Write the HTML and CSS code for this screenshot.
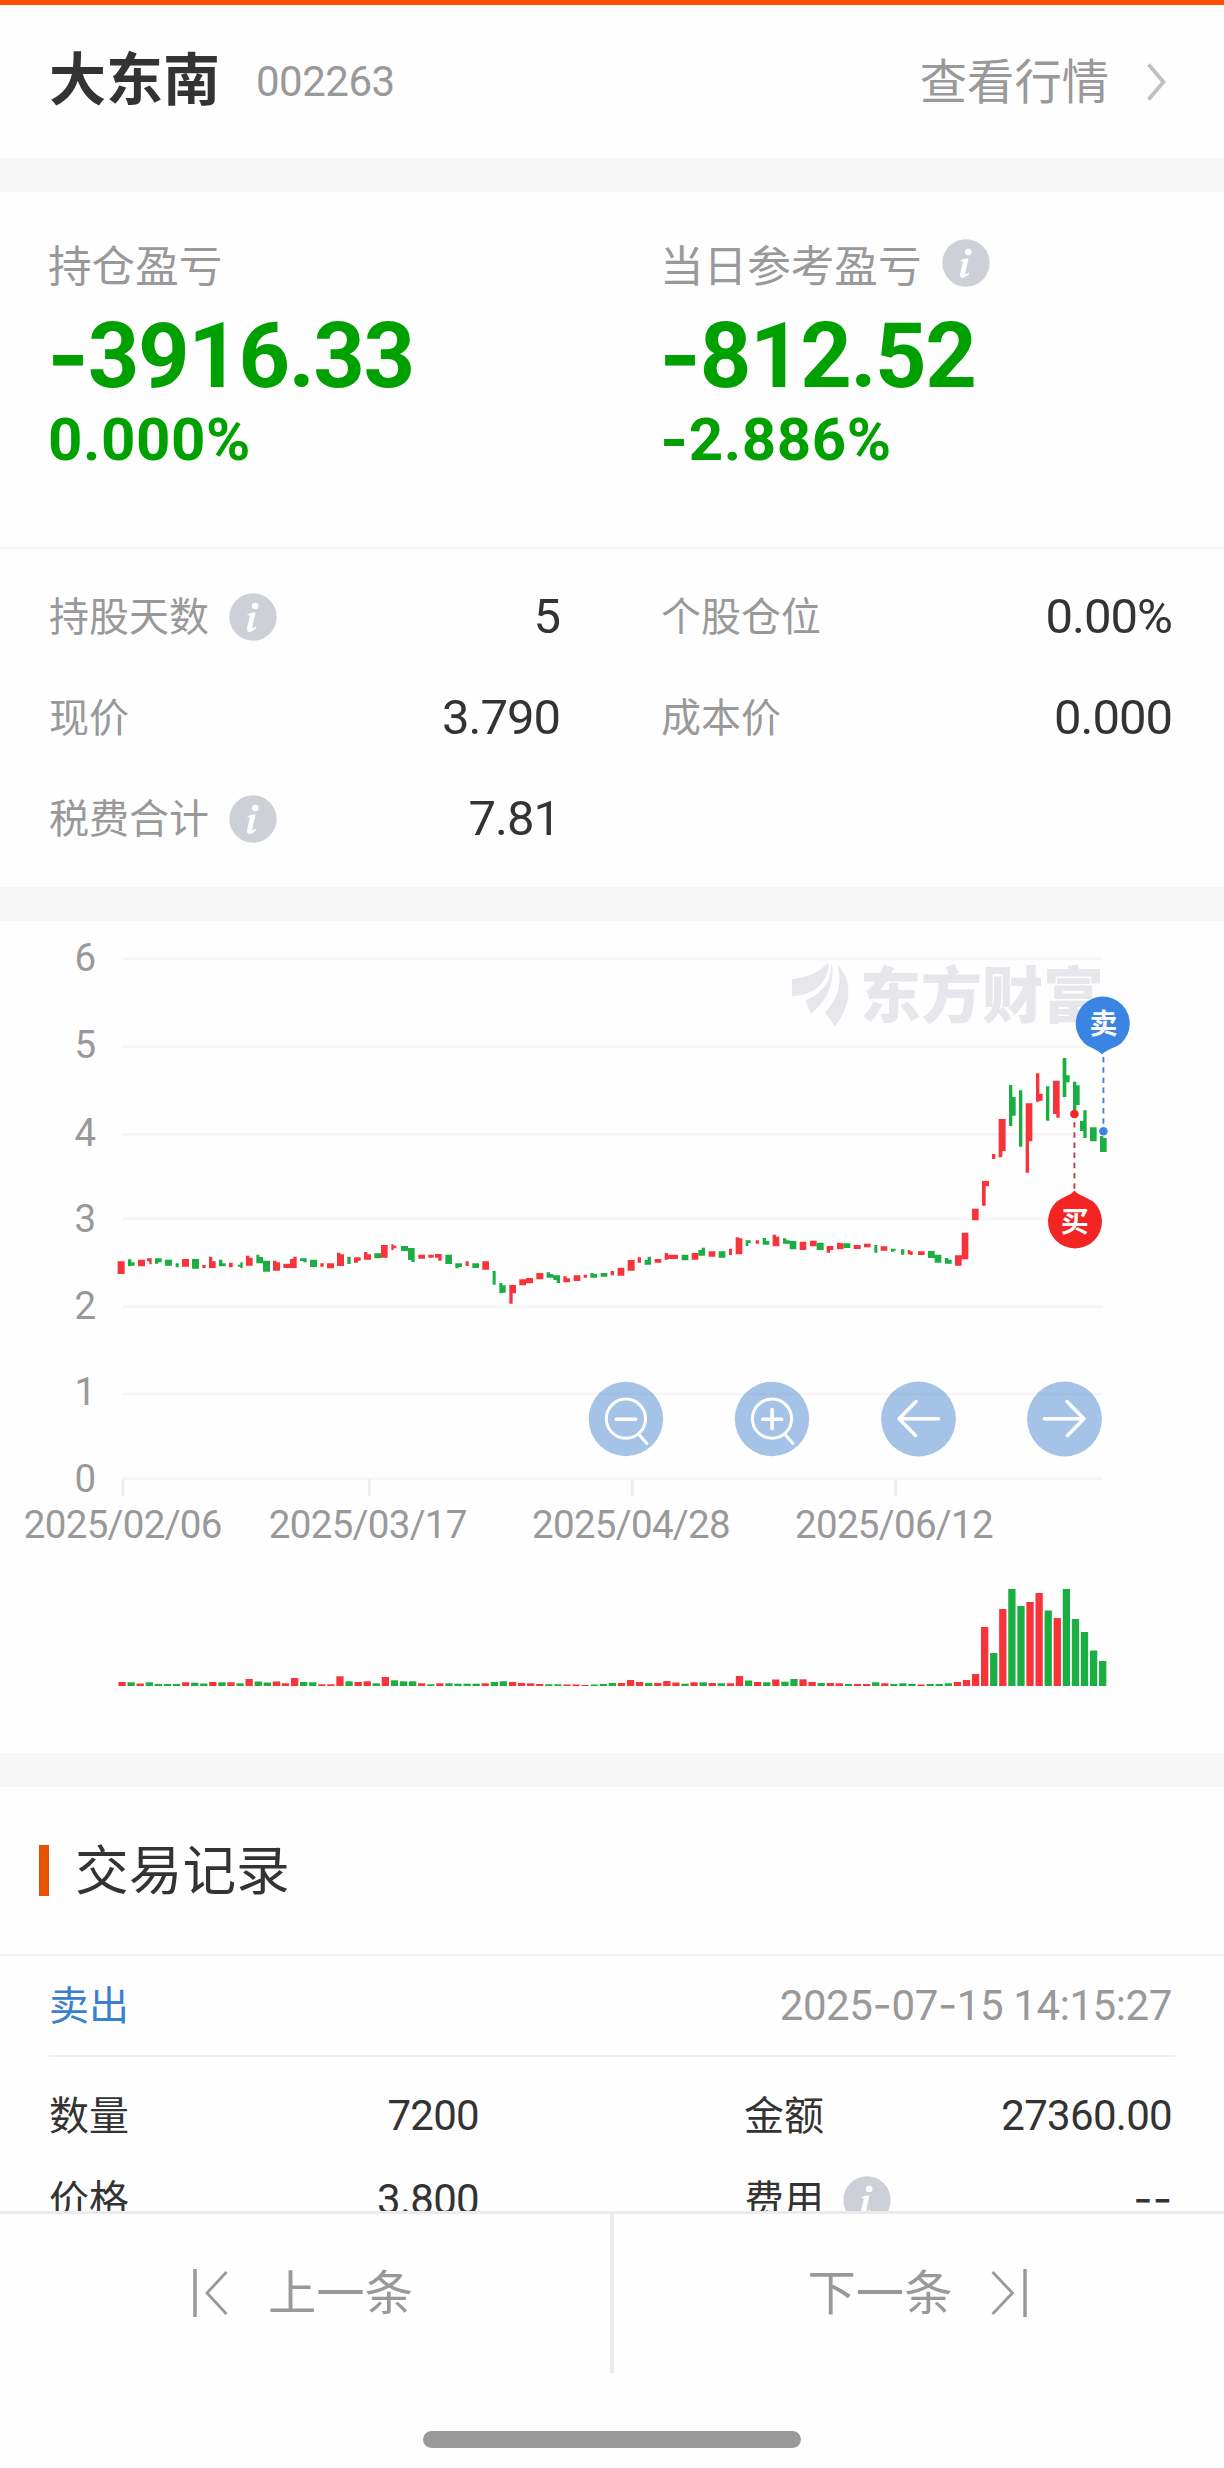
FILE: index.html
```html
<!DOCTYPE html>
<html lang="zh-CN">
<head>
<meta charset="utf-8">
<title>大东南 002263</title>
<link rel="stylesheet" href="styles.css">
</head>
<body>
<svg class="defs" width="0" height="0" aria-hidden="true">
  <symbol id="info" viewBox="0 0 48 48">
    <circle cx="24" cy="24" r="23.7" fill="#cdd0d6"/>
    <circle cx="26.2" cy="13" r="3.3" fill="#fff"/>
    <path d="M18.6 21.4C21 20 24 19.4 26.6 19.3L23.4 33.6C23 35.6 24 35.6 26.6 33.6L27.2 34.8C24.6 38 21.6 39.4 19.6 38.8C17.8 38.2 17.8 36 18.4 33.6L20.8 23.4C21.1 22.2 20 22.2 18.4 22.6Z" fill="#fff"/>
  </symbol>
</svg>
<div class="page">
  <main class="content">
    <header class="card head">
      <h1 class="name">大东南</h1>
      <span class="code">002263</span>
      <a class="quote">查看行情</a>
      <svg class="chevron" viewBox="0 0 20 38"><path d="M1.5 1.5L16.5 19L1.5 36.5"/></svg>
    </header>

    <section class="card overview">
      <div class="profits">
        <div class="profit">
          <div class="caption">持仓盈亏</div>
          <div class="amount"><span class="dash">-</span>3916.33</div>
          <div class="rate">0.000%</div>
        </div>
        <div class="profit">
          <div class="caption">当日参考盈亏<svg class="info"><use href="#info"/></svg></div>
          <div class="amount"><span class="dash">-</span>812.52</div>
          <div class="rate"><span class="dash">-</span>2.886%</div>
        </div>
      </div>
      <div class="facts">
        <div class="fact"><span class="key">持股天数</span><svg class="info"><use href="#info"/></svg><span class="val">5</span></div>
        <div class="fact"><span class="key">个股仓位</span><span class="val">0.00%</span></div>
        <div class="fact"><span class="key">现价</span><span class="val">3.790</span></div>
        <div class="fact"><span class="key">成本价</span><span class="val">0.000</span></div>
        <div class="fact"><span class="key">税费合计</span><svg class="info"><use href="#info"/></svg><span class="val">7.81</span></div>
      </div>
    </section>

    <section class="card chart">
      <svg class="plot" viewBox="0 921 1224 832">
        <path class="grid" d="M122.7 959H1102.3M122.7 1046.7H1102.3M122.7 1134.3H1102.3M122.7 1218.7H1102.3M122.7 1306.7H1102.3M122.7 1394H1102.3M122.7 1478.7H1102.3"/>
        <path class="tick" d="M122.8 1479V1496M369.3 1479V1496M632.4 1479V1496M895.5 1479V1496"/>
        <g class="axis y">
          <text x="85" y="971">6</text>
          <text x="85" y="1058">5</text>
          <text x="85" y="1145.5">4</text>
          <text x="85" y="1232">3</text>
          <text x="85" y="1318.5">2</text>
          <text x="85" y="1405">1</text>
          <text x="85" y="1492">0</text>
        </g>
        <g class="axis">
          <text x="122.8" y="1538">2025/02/06</text>
          <text x="367.8" y="1538">2025/03/17</text>
          <text x="631" y="1538">2025/04/28</text>
          <text x="894" y="1538">2025/06/12</text>
        </g>

        <g class="watermark">
          <path transform="translate(760 930) scale(.33333)" d="M96 148C145 142 180 125 206 97C207 135 185 165 163 180C135 194 115 198 96 198ZM213 97C222 120 218 165 195 205C180 227 165 240 152 253C150 240 138 225 138 210C165 200 190 180 203 155C212 138 215 118 213 97ZM232 106C255 125 266 155 265 190C263 232 245 262 223 290C216 272 205 262 195 248C215 225 235 195 238 160C240 140 238 125 232 106Z"/>
          <text x="860" y="1018">东方财富</text>
        </g>

        <g transform="translate(90 1200) scale(.33333)">
          <path class="up" d="M83 184H104V222H83ZM144 179H165V199H144ZM171 175H185V193H178V184H171ZM276 177H297V200H276ZM337 195H347V204H337ZM357 170H367V184H377V204H357ZM417 188H428V202H417ZM468 167H478V173H488V197H468ZM549 182H559V187H570V212H549ZM580 191H600V177H610V170H620V204H580ZM691 190H701V200H691ZM711 190H732V205H711ZM741 158H751V163H762V198H741ZM792 172H812V182H804V188H792ZM822 156H832V163H843V179H822ZM873 135H893V173H873ZM904 133H911V137H919V145H911V150H904ZM985 164H1005V176H985ZM1015 164H1031V173H1015ZM1035 162H1055V182H1045V173H1035ZM1127 184H1136V198H1127ZM1177 184H1197V209H1177ZM1258 255H1278V280H1268V311H1258ZM1288 238H1308V234H1329V250H1308V256H1288ZM1339 219H1360V238H1339Z"/>
          <path class="down" d="M114 178H124V187H134V197H124V199H114ZM195 175H215V187H205V191H195ZM225 179H246V197H225ZM257 190H266V202H257ZM306 177H327V206H306ZM387 179H397V190H407V199H387ZM451 187H458V204H451V200H444V194H451ZM499 164H508V171H519V182H540V215H519V190H499ZM630 175H650V187H640V183H630ZM660 179H681V201H660ZM772 170H782V192H772ZM853 160H873V175H853ZM933 138H954V144H974V186H964V180H954V153H933ZM1066 164H1086V192H1066ZM1096 190H1116V201H1106V205H1096ZM1147 190H1167V204H1147ZM1208 213H1217V254H1208ZM1228 249H1237V256H1247V278H1237V280H1228Z"/>
        </g>
        <g transform="translate(540 1200) scale(.33333)">
          <path class="up" d="M70 229H80V235H90V247H70ZM101 226H121V243H101ZM131 224H141V233H131ZM212 213H222V226H212ZM233 203H253V227H233ZM263 180H284V212H263ZM293 172H303V188H293ZM344 177H364V188H344ZM374 159H384V164H414V177H384V179H374ZM455 159H475V179H455ZM506 154H526V170H506ZM567 146H576V165H567ZM587 112H597V115H607V163H587ZM647 121H657V131H647ZM698 104H708V110H718V139H698ZM779 125H799V150H779ZM810 122H830V139H810ZM860 138H880V150H870V158H860ZM891 128H901V130H911V148H891ZM941 135H962V147H941ZM972 131H992V142H972ZM1022 139H1042V152H1022ZM1103 150H1110V154H1118V165H1110V163H1103ZM1134 154H1154V165H1134ZM1245 166H1265V98H1285V178H1265V197H1245ZM1296 26H1316V61H1296Z"/>
          <path class="down" d="M20 217H30V222H40V226H60V249H50V240H40V233H20ZM151 219H161V222H171V233H151ZM182 219H202V230H182ZM323 170H333V194H314V180H323ZM425 164H445V181H425ZM475 150H485V143H495V167H475ZM536 154H556V173H536ZM617 121H632V129H625V138H617ZM668 114H678V123H688V134H668ZM729 115H739V121H749V123H769V148H749V131H729ZM830 128H851V150H830ZM911 130H931V144H911ZM1003 135H1012V158H1003ZM1053 146H1067V152H1062V155H1053ZM1083 148H1093V164H1083ZM1164 153H1184V164H1204V188H1184V174H1164ZM1215 174H1225V179H1235V191H1215Z"/>
        </g>
        <g transform="translate(760 930) scale(.33333)">
          <path class="up" d="M666 753H687V769H677V827H666ZM696 672H706V687H696ZM716 567H737V663H727V682H716ZM797 520H817V634H807V728H797ZM828 430H838V491H848V512H838V515H828ZM879 452H899V563H889V552H879Z"/>
          <path class="down" d="M747 465H757V501H767V557H757V588H747ZM777 481H787V650H777ZM858 469H868V572H858ZM908 384H919V436H929V457H919V501H908ZM939 455H949V466H959V525H949V540H939ZM970 541H980V624H970V603H960V573H970ZM990 592H1010V634H990ZM1020 618H1030V624H1040V666H1020Z"/>
        </g>

        <g id="volume"></g>

        <g class="mark sell">
          <path class="lead" d="M1103.4 1057V1128"/>
          <circle cx="1103.4" cy="1131.3" r="4.3"/>
          <path d="M1102 1054.6C1098 1049.5 1091 1048.5 1084.5 1043.5A27 27 0 1 1 1121 1043.5C1114 1048.5 1106 1049.5 1102 1054.6Z"/>
          <text x="1103.5" y="1034">卖</text>
        </g>
        <g class="mark buy">
          <path class="lead" d="M1074.4 1122V1190"/>
          <circle cx="1074.4" cy="1114" r="4.3"/>
          <path d="M1074.5 1190.4C1078.5 1195.5 1086 1196.5 1093.2 1201.5A27 27 0 1 1 1056.8 1201.5C1063 1196.5 1070.5 1195.5 1074.5 1190.4Z"/>
          <text x="1074.8" y="1232">买</text>
        </g>

        <g class="control" transform="translate(625.9 1419)">
          <circle class="disc" r="37.2"/>
          <circle r="19.6" cy="-.3"/><path d="M13 15.5L21 24.5"/><path class="thick" d="M-9.5 .3H9.7"/>
        </g>
        <g class="control" transform="translate(772 1419)">
          <circle class="disc" r="37.2"/>
          <circle r="19.6" cy="-.3"/><path d="M13 15.5L21 24.5"/><path class="thick" d="M-9.5 .3H9.7M.1 -9.5V9.7"/>
        </g>
        <g class="control" transform="translate(918.5 1419)">
          <circle class="disc" r="37.4"/>
          <path class="thick" d="M20 -.3H-19M-2.5 -17.5L-19.5 -.3L-3 16.5"/>
        </g>
        <g class="control" transform="translate(1064.5 1419)">
          <circle class="disc" r="37.4"/>
          <path class="thick" d="M-20 -.3H19M2.5 -17.5L19.5 -.3L3 16.5"/>
        </g>
      </svg>
    </section>

    <section class="card records">
      <h2 class="title"><span class="title-name">交易记录</span></h2>
      <div class="record">
        <div class="record-head"><span class="side">卖出</span><time class="time">2025<span class="dash">-</span>07<span class="dash">-</span>15 14:15:27</time></div>
        <div class="record-row">
          <span class="cell"><span class="label">数量</span><span class="num">7200</span></span>
          <span class="cell"><span class="label">金额</span><span class="num">27360.00</span></span>
        </div>
        <div class="record-row">
          <span class="cell"><span class="label">价格</span><span class="num">3.800</span></span>
          <span class="cell"><span class="label">费用</span><svg class="info"><use href="#info"/></svg><span class="num dash">--</span></span>
        </div>
      </div>
    </section>
  </main>

  <footer class="foot">
    <nav class="pager">
      <a class="step prev"><svg viewBox="0 0 36 50"><path d="M2 1V49" class="stop"/><path d="M33.5 4L14 25L33.5 46"/></svg><span class="step-name">上一条</span></a>
      <a class="step next"><span class="step-name">下一条</span><svg viewBox="0 0 36 50"><path d="M34 1V49" class="stop"/><path d="M1.5 4L21.5 25L1.5 46"/></svg></a>
    </nav>
    <div class="home"></div>
  </footer>
</div>
<script src="volume.js"></script>
</body>
</html>
```

FILE: styles.css
```css
* { box-sizing: border-box; }
body {
  margin: 0;
  background: #fff;
  color: #333;
  font-family: Roboto, "Noto Sans CJK SC", sans-serif;
}
h1, h2 { margin: 0; }
.defs { display: block; height: 0; }
.page {
  display: flex;
  flex-direction: column;
  width: 1224px;
  height: 2468px;
  overflow: hidden;
}
.content {
  display: flex;
  flex-direction: column;
  gap: 34px;
  height: 2211px;
  flex: none;
  overflow: hidden;
  background: #f7f7f7;
}
.card { background: #fefefe; flex: none; }
.info { width: 48px; height: 48px; flex: none; }
.dash { font-family: Inter, sans-serif; line-height: 0; }

.head {
  display: flex;
  align-items: center;
  height: 158px;
  padding: 0 57px 0 49px;
  border-top: 5px solid #ff5000;
}
.name { font-size: 57px; line-height: 80px; font-weight: 700; padding-bottom: 1px; }
.code { margin-left: 36px; font-size: 42px; letter-spacing: -.5px; color: #999; }
.quote { margin-left: auto; padding-bottom: 7px; font-size: 47.3px; color: #999; }
.chevron { width: 20px; height: 38px; margin: 0 0 0 38px; fill: none; stroke: #c0c0c0; stroke-width: 3.8; }

.overview { height: 695px; }
.profits {
  display: grid;
  grid-template-columns: 612px 612px;
  height: 357px;
  padding-top: 47px;
  border-bottom: 2px solid #f5f5f5;
}
.profit { padding-left: 51px; }
.caption {
  display: flex;
  align-items: center;
  gap: 20px;
  margin: -1px 0 1px -3px;
  height: 50px;
  font-size: 43.6px;
  color: #999;
}
.amount, .rate { color: #00a000; font-weight: 700; }
.amount { margin-left: -4px; font-size: 90px; line-height: 90px; letter-spacing: -1.4px; margin-top: 24px; }
.rate { margin-left: -3px; font-size: 60px; line-height: 60px; margin-top: 8px; letter-spacing: .6px; }
.facts {
  display: grid;
  grid-template-columns: 511px 511px;
  grid-auto-rows: 101px;
  column-gap: 101px;
  padding: 17px 0 0 49px;
}
.fact { display: flex; align-items: center; gap: 20px; }
.key { padding-bottom: 5px; font-size: 40px; color: #999; }
.val { margin-left: auto; font-size: 49px; letter-spacing: -1px; }

.chart { height: 832px; }
.plot { display: block; width: 1224px; height: 832px; font-family: Roboto, "Noto Sans CJK SC", sans-serif; }
.grid { stroke: #f6f6f6; stroke-width: 2.7; fill: none; }
.tick { stroke: #ececec; stroke-width: 2.7; fill: none; }
.axis text { font-size: 38.5px; fill: #999; text-anchor: middle; letter-spacing: -.7px; }
.watermark { fill: #e6e6eb; }
.watermark text { font: 900 61px "Noto Sans CJK SC", sans-serif; }
.up { fill: #f8333a; }
.down { fill: #1bae42; }
.mark text { font-size: 28px; font-weight: 700; fill: #fff; text-anchor: middle; }
.sell { fill: #3a84e2; }
.buy { fill: #f22424; }
.lead { fill: none; stroke-width: 1.9; stroke-dasharray: 5.5 4.7; }
.sell .lead { stroke: #4c82cf; }
.buy .lead { stroke: #bd4046; }
.control { fill: none; stroke: #fff; stroke-width: 3; stroke-linecap: round; stroke-linejoin: round; }
.control .thick { stroke-width: 3.5; }
.control .disc { fill: #5b92d2; fill-opacity: .55; stroke: none; }

.title {
  display: flex;
  align-items: center;
  height: 169px;
  padding: 0 0 0 39px;
  border-bottom: 2px solid #f1f1f1;
  font-size: 53.7px;
  font-weight: 400;
}
.title::before { content: ""; width: 10px; height: 51px; margin-right: 26px; background: #e65300; }
.title-name { padding-bottom: 8px; }
.record { padding: 0 49px; }
.record-head {
  display: flex;
  align-items: center;
  justify-content: space-between;
  height: 101px;
  margin-bottom: 17px;
  border-bottom: 2px solid #f1f1f1;
  padding-right: 3px;
}
.side { padding-bottom: 6px; font-size: 40px; color: #3a80d0; }
.time { font-size: 42px; letter-spacing: -.4px; color: #999; }
.record-row { display: grid; grid-template-columns: 430px 428px; column-gap: 265px; height: 84px; font-size: 40px; }
.cell { display: flex; align-items: center; gap: 19px; }
.label { padding-bottom: 7px; }
.num { margin-left: auto; padding-bottom: 2px; font-size: 42px; letter-spacing: -.7px; }
.num.dash { line-height: 1; letter-spacing: 0; }

.foot { flex: 1; border-top: 3px solid #ebebeb; background: #fefefe; }
.pager { display: grid; grid-template-columns: 614px 610px; height: 159px; }
.step {
  display: flex;
  align-items: center;
  justify-content: center;
  gap: 39px;
  padding-bottom: 1px;
  font-size: 48.3px;
  color: #999;
}
.step-name { padding-bottom: 9px; }
.prev { border-right: 4px solid #ebebeb; padding-right: 4px; }
.next { padding-right: 3px; }
.step svg { width: 36px; height: 50px; fill: none; stroke: #999; stroke-width: 2.8; }
.step .stop { stroke-width: 3.5; }
.home { width: 378px; height: 17px; margin: 58px auto 0; border-radius: 9px; background: #999; }
```

FILE: volume.js
```javascript
// Daily volume bars: R = up day, G = down day, followed by the bar height.
const days = `R4 G3.7 R2.5 G3.7 G2 G2 G2 R3.7 G3.3 G2.5 R4 G3.7 R3.7 G2.7 R7 G4.5 G3.5 R4.5 R2.7 R8
G4 G3.7 R1.7 R1.7 R9.7 G4.7 R4 R4.7 G2.7 R9 G5.7 G4.7 G4.7 R2.7 G1.7 R2.7 G2.7 G2.3 G2.3 G2.3
R2.7 G4 G4.7 R4 R3 R2.7 R2 G1.7 G1.7 R1.5 R1.5 R1 G1.5 G2 G3 R3 R6 R4 G3 R3
R5 R3.5 G2.3 R3.7 G3.7 R3 G2.7 R2.7 R10 G5.5 R4 G3.7 R6.5 G4.3 G7 R6.7 R4 G3 R3 R2.7
G2 R2 R2 G3.7 R2.7 G2 G2.7 G2 R1.5 G2 G2 G2.7 R4 R6 R12 R59 G33 R77 G97 G80
R84 R93 G75.5 R68 G97 G67 G54 G35.5 G25`.split(/\s+/);
const base = 1686;
const volume = document.getElementById("volume");
days.forEach((day, i) => {
  const height = parseFloat(day.slice(1));
  const bar = document.createElementNS("http://www.w3.org/2000/svg", "rect");
  bar.setAttribute("class", day[0] === "R" ? "up" : "down");
  bar.setAttribute("x", (118.4 + i * 9.08).toFixed(2));
  bar.setAttribute("y", base - height);
  bar.setAttribute("width", 7.3);
  bar.setAttribute("height", height);
  volume.append(bar);
});
```
